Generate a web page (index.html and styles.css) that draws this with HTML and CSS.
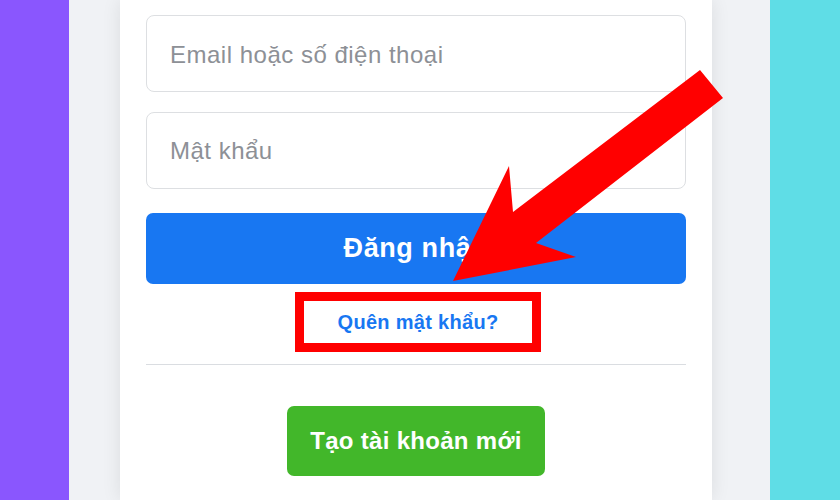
FILE: index.html
```html
<!DOCTYPE html>
<html lang="vi">
<head>
<meta charset="utf-8">
<title>Đăng nhập</title>
<link rel="stylesheet" href="styles.css">
</head>
<body>
<div class="page">
  <div class="strip strip-left"></div>
  <main class="stage">
    <section class="card">
      <form class="login-form">
        <div class="field"><span class="placeholder">Email hoặc số điện thoại</span></div>
        <div class="field"><span class="placeholder">Mật khẩu</span></div>
        <button type="button" class="btn btn-login">Đăng nhập</button>
        <div class="forgot-row">
          <a class="forgot-link" href="#">Quên mật khẩu?</a>
        </div>
        <hr class="divider">
        <div class="create-row">
          <button type="button" class="btn btn-create">Tạo tài khoản mới</button>
        </div>
      </form>
    </section>
  </main>
  <div class="strip strip-right"></div>
  <svg class="arrow" width="840" height="500" viewBox="0 0 840 500" aria-hidden="true">
    <polygon points="700,70 723,98 536,243 576,257 453,281 509,166 513,212" fill="#ff0000"/>
  </svg>
</div>
</body>
</html>
```

FILE: styles.css
```css
* { box-sizing: border-box; }
html, body { margin: 0; padding: 0; }
body {
  font-family: "Liberation Sans", Arial, sans-serif;
  width: 840px;
  height: 500px;
  overflow: hidden;
}
.page {
  position: relative;
  display: flex;
  width: 840px;
  height: 500px;
}
.strip { height: 100%; }
.strip-left { width: 69px; background: #8a56fe; }
.strip-right { width: 70px; background: #5fdde6; }
.stage {
  flex: 1;
  background: #f0f2f5;
  padding: 0 58px 0 51px;
  display: flex;
}
.card {
  width: 592px;
  height: 100%;
  background: #ffffff;
  box-shadow: 0 0 18px rgba(0, 0, 0, 0.09);
  padding: 15px 26px 0;
}
.login-form {
  display: flex;
  flex-direction: column;
}
.field {
  height: 77px;
  border: 1px solid #dddfe2;
  border-radius: 8px;
  padding: 3px 23px 0;
  display: flex;
  align-items: center;
  margin-bottom: 20px;
}
.field + .field { margin-bottom: 24px; padding-top: 1px; }
.placeholder {
  font-size: 24px;
  color: #8d9096;
  letter-spacing: 0.5px;
}
.btn {
  border: none;
  color: #ffffff;
  font-family: inherit;
  font-weight: bold;
  cursor: pointer;
}
.btn-login {
  height: 71px;
  border-radius: 7px;
  background: #1877f2;
  font-size: 27px;
  letter-spacing: 0.6px;
}
.forgot-row {
  display: flex;
  justify-content: center;
  margin-top: 8px;
  padding-left: 4px;
}
.forgot-link {
  display: inline-block;
  border: 9px solid #ff0000;
  width: 246px;
  height: 60px;
  text-align: center;
  line-height: 42px;
  font-size: 20px;
  font-weight: bold;
  color: #1877f2;
  text-decoration: none;
  letter-spacing: 0.3px;
}
.divider {
  border: none;
  border-top: 1px solid #dadde1;
  margin: 12px 0 0;
  height: 0;
}
.create-row {
  display: flex;
  justify-content: center;
  margin-top: 41px;
}
.btn-create {
  width: 258px;
  height: 70px;
  border-radius: 7px;
  background: #42b72a;
  font-size: 24px;
  letter-spacing: 0.3px;
}
.arrow {
  position: absolute;
  top: 0;
  left: 0;
  pointer-events: none;
}
```
